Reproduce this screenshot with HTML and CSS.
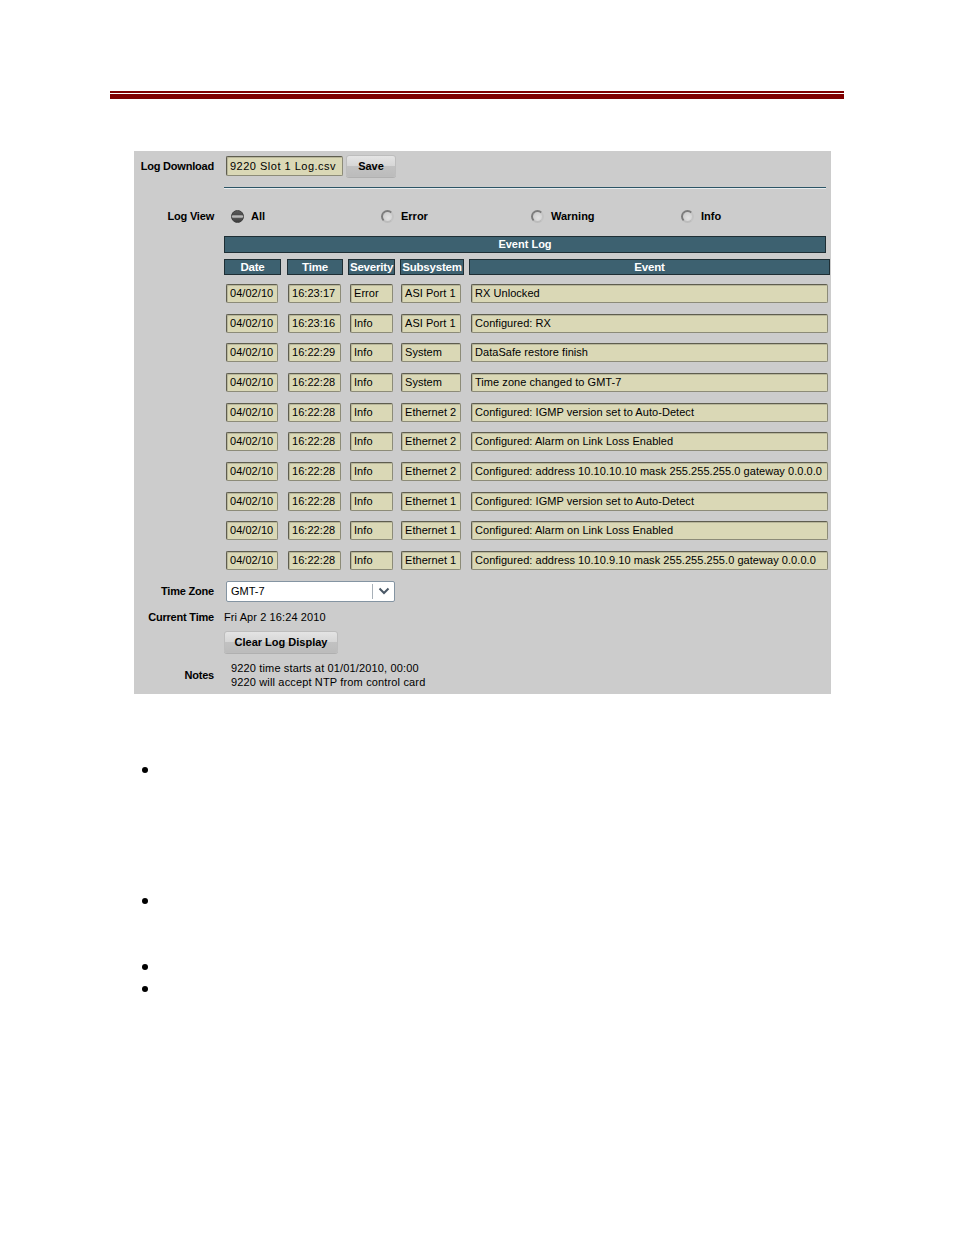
FILE: index.html
```html
<!DOCTYPE html>
<html>
<head>
<meta charset="utf-8">
<link rel="stylesheet" href="styles.css">
</head>
<body>
<div class="page">
  <div class="rule"><div class="rule-thin"></div><div class="rule-thick"></div></div>

  <div class="panel">
    <div class="row row-download">
      <div class="label">Log Download</div>
      <div class="content">
        <div class="field filename">9220 Slot 1 Log.csv</div>
        <div class="btn save">Save</div>
      </div>
    </div>
    <div class="divider"></div>

    <div class="row row-view">
      <div class="label">Log View</div>
      <div class="content radios">
        <div class="radio-item"><span class="radio on"></span><span>All</span></div>
        <div class="radio-item"><span class="radio"></span><span>Error</span></div>
        <div class="radio-item"><span class="radio"></span><span>Warning</span></div>
        <div class="radio-item"><span class="radio"></span><span>Info</span></div>
      </div>
    </div>

    <div class="evlog">
      <div class="bar">Event Log</div>
      <div class="heads">
        <div class="hd h-date">Date</div>
        <div class="hd h-time">Time</div>
        <div class="hd h-sev">Severity</div>
        <div class="hd h-sub">Subsystem</div>
        <div class="hd h-ev">Event</div>
      </div>
      <div class="rows">
        <div class="drow"><div class="field c-date">04/02/10</div><div class="field c-time">16:23:17</div><div class="field c-sev">Error</div><div class="field c-sub">ASI Port 1</div><div class="field c-ev">RX Unlocked</div></div>
        <div class="drow"><div class="field c-date">04/02/10</div><div class="field c-time">16:23:16</div><div class="field c-sev">Info</div><div class="field c-sub">ASI Port 1</div><div class="field c-ev">Configured: RX</div></div>
        <div class="drow"><div class="field c-date">04/02/10</div><div class="field c-time">16:22:29</div><div class="field c-sev">Info</div><div class="field c-sub">System</div><div class="field c-ev">DataSafe restore finish</div></div>
        <div class="drow"><div class="field c-date">04/02/10</div><div class="field c-time">16:22:28</div><div class="field c-sev">Info</div><div class="field c-sub">System</div><div class="field c-ev">Time zone changed to GMT-7</div></div>
        <div class="drow"><div class="field c-date">04/02/10</div><div class="field c-time">16:22:28</div><div class="field c-sev">Info</div><div class="field c-sub">Ethernet 2</div><div class="field c-ev">Configured: IGMP version set to Auto-Detect</div></div>
        <div class="drow"><div class="field c-date">04/02/10</div><div class="field c-time">16:22:28</div><div class="field c-sev">Info</div><div class="field c-sub">Ethernet 2</div><div class="field c-ev">Configured: Alarm on Link Loss Enabled</div></div>
        <div class="drow"><div class="field c-date">04/02/10</div><div class="field c-time">16:22:28</div><div class="field c-sev">Info</div><div class="field c-sub">Ethernet 2</div><div class="field c-ev">Configured: address 10.10.10.10 mask 255.255.255.0 gateway 0.0.0.0</div></div>
        <div class="drow"><div class="field c-date">04/02/10</div><div class="field c-time">16:22:28</div><div class="field c-sev">Info</div><div class="field c-sub">Ethernet 1</div><div class="field c-ev">Configured: IGMP version set to Auto-Detect</div></div>
        <div class="drow"><div class="field c-date">04/02/10</div><div class="field c-time">16:22:28</div><div class="field c-sev">Info</div><div class="field c-sub">Ethernet 1</div><div class="field c-ev">Configured: Alarm on Link Loss Enabled</div></div>
        <div class="drow"><div class="field c-date">04/02/10</div><div class="field c-time">16:22:28</div><div class="field c-sev">Info</div><div class="field c-sub">Ethernet 1</div><div class="field c-ev">Configured: address 10.10.9.10 mask 255.255.255.0 gateway 0.0.0.0</div></div>
      </div>
    </div>

    <div class="row row-tz">
      <div class="label">Time Zone</div>
      <div class="content">
        <div class="select">
          <span class="sel-text">GMT-7</span>
          <span class="sel-arrow"><svg width="12" height="8" viewBox="0 0 12 8"><path d="M1.5 1.5 L6 6 L10.5 1.5" fill="none" stroke="#4a5866" stroke-width="2"/></svg></span>
        </div>
      </div>
    </div>

    <div class="row row-ct">
      <div class="label">Current Time</div>
      <div class="content ct-text">Fri Apr 2 16:24 2010</div>
    </div>

    <div class="row row-clear">
      <div class="label"></div>
      <div class="content"><div class="btn clear">Clear Log Display</div></div>
    </div>

    <div class="row row-notes">
      <div class="label">Notes</div>
      <div class="content notes">
        <div>9220 time starts at 01/01/2010, 00:00</div>
        <div>9220 will accept NTP from control card</div>
      </div>
    </div>
  </div>

  <div class="bullets">
    <div class="bullet b1"></div>
    <div class="bullet b2"></div>
    <div class="bullet b3"></div>
    <div class="bullet b4"></div>
  </div>
</div>
</body>
</html>
```

FILE: styles.css
```css
html, body {
  margin: 0;
  padding: 0;
  background: #ffffff;
}
body {
  font-family: "Liberation Sans", Arial, sans-serif;
  font-size: 11px;
  color: #000;
}
.page {
  width: 954px;
  height: 1235px;
  padding-top: 91px;
  box-sizing: border-box;
}
.rule {
  margin-left: 110px;
  width: 734px;
}
.rule-thin {
  height: 2px;
  background: #7f0000;
}
.rule-thick {
  margin-top: 1px;
  height: 5px;
  background: #7f0000;
}
.panel {
  margin-top: 52px;
  margin-left: 134px;
  width: 697px;
  height: 543px;
  background: #cccccc;
  padding-top: 4px;
  box-sizing: border-box;
}
.row {
  display: flex;
  align-items: center;
}
.label {
  width: 80px;
  text-align: right;
  font-weight: bold;
  flex: none;
  letter-spacing: -0.2px;
}
.content {
  margin-left: 10px;
  display: flex;
  align-items: center;
}
.row-download { height: 22px; }
.field {
  background: #dad8b6;
  border: 1px solid #8c8b78;
  border-top-color: #5e5d4f;
  border-left-color: #5e5d4f;
  box-shadow: inset 1px 1px 0 #b8b69a;
  border-radius: 2px;
  box-sizing: border-box;
  height: 19px;
  line-height: 17px;
  padding-left: 3px;
  white-space: nowrap;
  overflow: hidden;
  letter-spacing: 0.05px;
}
.filename {
  margin-left: 2px;
  width: 117px;
  height: 20px;
  line-height: 18px;
  letter-spacing: 0.5px;
}
.btn {
  font-weight: bold;
  text-align: center;
  border: 1px solid #bdbdbd;
  border-radius: 3px;
  background: linear-gradient(#e4e4e4 0%, #d6d6d6 50%, #c2c2c2 51%, #bcbcbc 100%);
  box-sizing: border-box;
  box-shadow: 0 1px 0 #b0b0b0;
}
.save {
  margin-left: 3px;
  width: 50px;
  height: 22px;
  line-height: 20px;
}
.divider {
  margin-left: 90px;
  margin-top: 10px;
  width: 602px;
  height: 1px;
  background: #2c5566;
  box-shadow: 0 1px 0 #e8ecee;
}
.row-view {
  margin-top: 20px;
  height: 16px;
}
.radios {
  margin-left: 17px;
}
.radio-item {
  width: 150px;
  display: flex;
  align-items: center;
  font-weight: bold;
}
.radio-item span:last-child { margin-left: 7px; }
.radio {
  width: 13px;
  height: 13px;
  border-radius: 50%;
  box-sizing: border-box;
  border: 2px solid #7c7c7c;
  border-right-color: #c4c4c4;
  border-bottom-color: #bcbcbc;
  background: radial-gradient(circle at 60% 65%, #e2e2e2 0%, #cfcfcf 70%);
}
.radio.on {
  border: 1px solid #3e3e3e;
  background: linear-gradient(#5a5a5a 0%, #4a4a4a 38%, #b8b8b8 42%, #b8b8b8 58%, #555 62%, #3a3a3a 100%);
}
.evlog {
  margin-top: 12px;
  margin-left: 90px;
}
.bar {
  width: 602px;
  height: 17px;
  box-sizing: border-box;
  background: #3d6170;
  border: 1px solid #1e2e34;
  color: #fff;
  font-weight: bold;
  text-align: center;
  line-height: 15px;
}
.heads {
  margin-top: 6px;
  display: flex;
}
.hd {
  height: 16px;
  box-sizing: border-box;
  background: #3d6170;
  border: 1px solid #1e2e34;
  color: #fff;
  font-weight: bold;
  font-size: 11.5px;
  text-align: center;
  line-height: 14px;
  letter-spacing: -0.2px;
}
.h-date { width: 57px; }
.h-time { width: 56px; margin-left: 6px; }
.h-sev { width: 47px; margin-left: 5px; }
.h-sub { width: 64px; margin-left: 5px; }
.h-ev { width: 361px; margin-left: 5px; }
.rows {
  margin-top: 9px;
  display: flex;
  flex-direction: column;
  row-gap: 10.67px;
}
.drow {
  display: flex;
  height: 19px;
}
.c-date { width: 52px; margin-left: 2px; }
.c-time { width: 53px; margin-left: 10px; }
.c-sev { width: 43px; margin-left: 9px; }
.c-sub { width: 60px; margin-left: 8px; }
.c-ev { width: 357px; margin-left: 10px; }
.row-tz {
  margin-top: 11px;
  height: 21px;
}
.select {
  margin-left: 2px;
  width: 169px;
  height: 21px;
  box-sizing: border-box;
  background: #fff;
  border: 1px solid #8494a2;
  border-radius: 2px;
  display: flex;
  align-items: center;
}
.sel-text {
  flex: 1;
  padding-left: 4px;
}
.sel-arrow {
  width: 21px;
  height: 15px;
  border-left: 1px solid #a7b0b8;
  display: flex;
  align-items: center;
  justify-content: center;
}
.row-ct {
  margin-top: 8px;
  height: 14px;
}
.ct-text { letter-spacing: 0.1px; }
.row-clear {
  margin-top: 7px;
  height: 22px;
}
.clear {
  width: 114px;
  height: 22px;
  line-height: 20px;
}
.row-notes {
  margin-top: 8px;
  height: 28px;
}
.notes {
  margin-left: 17px;
  flex-direction: column;
  align-items: flex-start;
  line-height: 14px;
  letter-spacing: 0.15px;
}
.bullets {
  margin-left: 142px;
  margin-top: 73px;
}
.bullet {
  width: 6px;
  height: 6px;
  border-radius: 50%;
  background: #000;
}
.b2 { margin-top: 125px; }
.b3 { margin-top: 60px; }
.b4 { margin-top: 16px; }
```
